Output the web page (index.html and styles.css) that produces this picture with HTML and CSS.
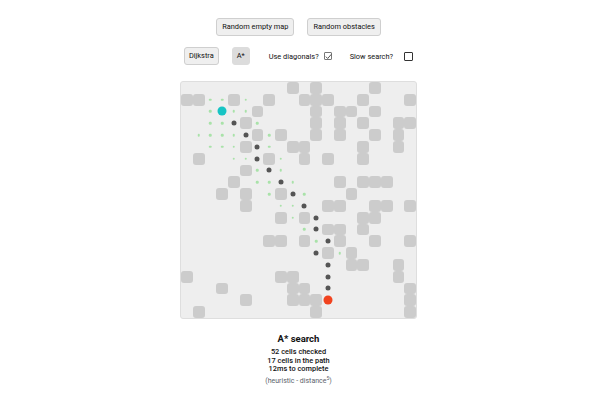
FILE: index.html
```html
<!DOCTYPE html>
<html lang="en">
<head>
<meta charset="utf-8">
<title>Pathfinding</title>
<link rel="stylesheet" href="styles.css">
</head>
<body>
<div class="app">
  <div class="toolbar">
    <button class="btn">Random empty map</button>
    <button class="btn">Random obstacles</button>
  </div>
  <div class="options">
    <button class="btn btn-sm">Dijkstra</button>
    <button class="btn btn-sm btn-active">A*</button>
    <label class="opt opt-diag">Use diagonals?
      <span class="check checked"><svg viewBox="0 0 9 9" width="9" height="9"><path d="M1.8 4.6 L3.7 6.5 L7.3 2.3" fill="none" stroke="#555" stroke-width="1"/></svg></span>
    </label>
    <label class="opt opt-slow">Slow search?
      <span class="check"></span>
    </label>
  </div>
  <div class="grid" id="grid"></div>
  <div class="result">
    <div class="title">A* search</div>
    <div class="stat"><b>52</b> cells checked</div>
    <div class="stat"><b>17</b> cells in the path</div>
    <div class="stat"><b>12ms</b> to complete</div>
    <div class="note">(heuristic - distance<sup>5</sup>)</div>
  </div>
</div>
<script src="app.js"></script>
</body>
</html>
```
FILE: styles.css
```css
html, body {
  margin: 0;
  padding: 0;
  background: #fff;
}
body {
  font-family: Roboto, "Liberation Sans", Arial, sans-serif;
  color: #111;
}
.app {
  width: 597px;
  display: flex;
  flex-direction: column;
  align-items: center;
  padding-top: 18px;
}
.toolbar {
  display: flex;
  gap: 13px;
}
.btn {
  font-family: inherit;
  font-size: 7.4px;
  height: 18px;
  padding: 0 5px;
  background: #efefef;
  border: 1px solid #cfcfcf;
  border-radius: 3px;
  color: #111;
  line-height: 16px;
}
.btn-sm {
  padding: 0 4px;
}
.btn-active {
  background: #dcdcdc;
  border-color: #dcdcdc;
}
.options {
  display: flex;
  align-items: center;
  margin-top: 11px;
  gap: 13px;
  font-size: 7.4px;
}
.opt {
  display: flex;
  align-items: center;
  gap: 5px;
}
.opt-diag {
  margin-left: 6px;
}
.opt-slow {
  margin-left: 5px;
  gap: 11px;
}
.check {
  display: inline-block;
  width: 9px;
  height: 9px;
  box-sizing: border-box;
  border: 1px solid #333;
  background: #fff;
  border-radius: 1px;
  position: relative;
}
.check.checked {
  width: 8px;
  height: 8px;
  border-color: #777;
}
.check svg {
  position: absolute;
  left: -1px;
  top: -1px;
}
.grid {
  margin-top: 16px;
  display: grid;
  grid-template-columns: repeat(20, 11.75px);
  grid-auto-rows: 11.8px;
  background: #eeeeee;
  border: 1px solid #dedede;
  border-radius: 3px;
}
.cell {
  position: relative;
}
.cell.wall {
  background: #cccccc;
  border-radius: 3px;
}
.cell.seen::after,
.cell.path::after,
.cell.start::after,
.cell.end::after {
  content: "";
  position: absolute;
  left: 50%;
  top: 50%;
  border-radius: 50%;
  transform: translate(-50%, -50%);
}
.cell.seen::after {
  width: 2.5px;
  height: 2.5px;
  background: #a9e2a9;
}
.cell.path::after {
  width: 5px;
  height: 5px;
  background: #555555;
}
.cell.start::after {
  width: 9px;
  height: 9px;
  background: #17c4c4;
}
.cell.end::after {
  width: 9px;
  height: 9px;
  background: #f1431f;
}
.result {
  margin-top: 14px;
  display: flex;
  flex-direction: column;
  align-items: center;
}
.title {
  font-size: 9.5px;
  font-weight: 700;
  line-height: 12px;
  margin-bottom: 3px;
}
.stat {
  font-size: 7.4px;
  line-height: 8.6px;
  font-weight: 500;
  color: #111;
}
.stat b {
  font-weight: 500;
}
.note {
  margin-top: 3px;
  font-size: 7px;
  line-height: 9px;
  color: #5a5f6a;
}
.note sup {
  font-size: 5px;
  vertical-align: 3px;
  line-height: 0;
}
```
FILE: app.js
```js
(function () {
  var walls = {
    0: [9, 11, 16],
    1: [0, 1, 4, 7, 10, 11, 12, 15, 19],
    2: [6, 11, 13, 14, 16],
    3: [5, 11, 13, 15, 18, 19],
    4: [6, 8, 11, 13, 16, 18],
    5: [5, 9, 10, 15, 18],
    6: [1, 7, 10, 12, 15],
    7: [5],
    8: [4, 13, 15, 16, 17],
    9: [3, 5, 8, 14],
    10: [5, 12, 13, 16, 17, 19],
    11: [8, 10, 15, 16],
    12: [12, 13, 15],
    13: [7, 8, 10, 13, 16, 19],
    14: [12, 14],
    15: [14, 15, 18],
    16: [0, 8, 9, 18],
    17: [3, 9, 10, 19],
    18: [5, 9, 10, 11, 19],
    19: [1, 11, 19]
  };
  var seen = {
    1: [2, 3, 5],
    2: [2, 4, 5],
    3: [2, 3, 6],
    4: [1, 2, 3, 4, 7],
    5: [2, 3, 4, 7],
    6: [4, 5, 8],
    7: [6, 8],
    8: [6, 7, 9],
    9: [7, 10],
    10: [8, 9],
    11: [9],
    12: [10],
    13: [11],
    14: [13]
  };
  var path = [[4,3],[5,4],[6,5],[6,6],[7,7],[8,8],[9,9],[10,10],[11,11],[11,12],[12,13],[11,14],[12,15],[12,16],[12,17]];
  var start = [3, 2], end = [12, 18];
  var grid = document.getElementById('grid');
  function has(map, c, r) { return map[r] && map[r].indexOf(c) !== -1; }
  function inPath(c, r) {
    for (var i = 0; i < path.length; i++) if (path[i][0] === c && path[i][1] === r) return true;
    return false;
  }
  for (var r = 0; r < 20; r++) {
    for (var c = 0; c < 20; c++) {
      var d = document.createElement('div');
      d.className = 'cell';
      if (has(walls, c, r)) d.className += ' wall';
      else if (c === start[0] && r === start[1]) d.className += ' start';
      else if (c === end[0] && r === end[1]) d.className += ' end';
      else if (inPath(c, r)) d.className += ' path';
      else if (has(seen, c, r)) d.className += ' seen';
      grid.appendChild(d);
    }
  }
})();
```
